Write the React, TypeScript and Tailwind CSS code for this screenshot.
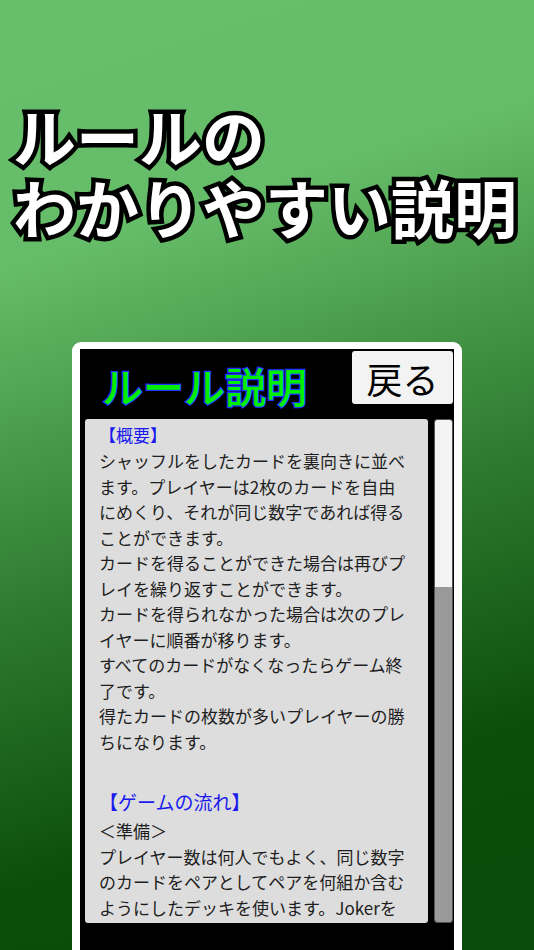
const jp = "[font-family:'Noto_Sans_CJK_JP','Noto_Sans',sans-serif]";

type Line = { text: string; kind?: "head" | "blank" };

const rules: Line[] = [
  { text: "【概要】", kind: "head" },
  { text: "シャッフルをしたカードを裏向きに並べ" },
  { text: "ます。プレイヤーは2枚のカードを自由" },
  { text: "にめくり、それが同じ数字であれば得る" },
  { text: "ことができます。" },
  { text: "カードを得ることができた場合は再びプ" },
  { text: "レイを繰り返すことができます。" },
  { text: "カードを得られなかった場合は次のプレ" },
  { text: "イヤーに順番が移ります。" },
  { text: "すべてのカードがなくなったらゲーム終" },
  { text: "了です。" },
  { text: "得たカードの枚数が多いプレイヤーの勝" },
  { text: "ちになります。" },
  { text: "", kind: "blank" },
  { text: "【ゲームの流れ】", kind: "head" },
  { text: "＜準備＞" },
  { text: "プレイヤー数は何人でもよく、同じ数字" },
  { text: "のカードをペアとしてペアを何組か含む" },
  { text: "ようにしたデッキを使います。Jokerを" },
];

function RuleText() {
  return (
    <div className="pt-[3px] pl-[14px] text-[17px] text-[#1e1e1e]">
      {rules.map((l, i) => {
        if (l.kind === "blank") return <div key={i} className="h-[33px]" />;
        if (l.kind === "head")
          return (
            <div
              key={i}
              className={i === 0 ? "leading-[26px] text-[17px] text-[#1a1aee]" : "leading-[30px] pb-[1px] text-[19px] text-[#1a1aee]"}
            >
              {l.text}
            </div>
          );
        return (
          <div key={i} className="leading-[25.5px] whitespace-nowrap">
            {l.text}
          </div>
        );
      })}
    </div>
  );
}

export default function App() {
  return (
    <div
      className={`${jp} w-[534px] h-[950px] overflow-hidden flex flex-col bg-[linear-gradient(162deg,#68bf6b_0%,#66bd69_24%,#2f7d31_54%,#0b4d0b_80%,#0a4a0a_100%)]`}
    >
      {/* Headline */}
      <h1 className="pt-[99px] pl-[13px] text-[63px] leading-[71px] font-bold text-white [paint-order:stroke_fill] [-webkit-text-stroke:9px_black] whitespace-nowrap">
        ルールの
        <br />
        わかりやすい説明
      </h1>

      {/* Rules panel */}
      <div className="mt-[101px] ml-[72px] w-[390px] flex-1 rounded-t-[9px] bg-white px-[8px] pt-[7px]">
        <div className="h-full bg-black flex flex-col">
          <div className="h-[70px] flex justify-between">
            <div className="pl-[22px] pt-[8px] text-[41px] leading-[56px] font-medium text-[#00ee00] [paint-order:stroke_fill] [-webkit-text-stroke:2.5px_#2233ff]">
              ルール説明
            </div>
            <button className="mt-[2px] mr-[1px] w-[101px] h-[53px] rounded-[3px] bg-[#f3f3f3] text-[36px] leading-none text-black">
              戻る
            </button>
          </div>

          <div className="flex gap-[6px] pl-[5px]">
            <div className="w-[343px] h-[504px] overflow-hidden rounded-[3px] bg-[#dddddd]">
              <RuleText />
            </div>
            {/* Scroll track */}
            <div className="w-[19px] h-[504px] flex flex-col overflow-hidden rounded-[3px] border border-[#555555]">
              <div className="h-[167px] bg-[#f4f4f4]" />
              <div className="flex-1 bg-[#999999]" />
            </div>
          </div>
        </div>
      </div>
    </div>
  );
}
